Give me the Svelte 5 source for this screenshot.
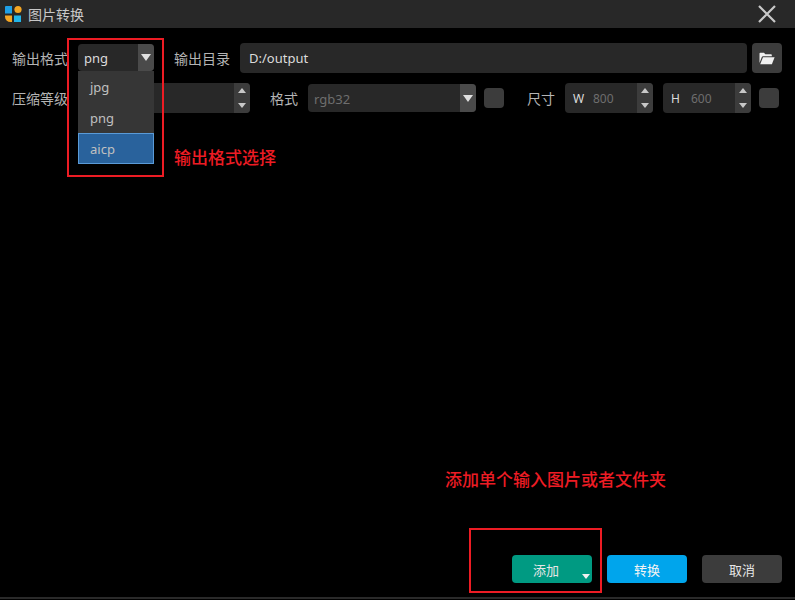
<script>
  let fmtOptions = ['jpg', 'png', 'aicp'];
  let selected = 'aicp';
</script>

<div class="window">
  <div class="titlebar">
    <svg class="logo" width="18" height="18" viewBox="0 0 18 18">
      <path d="M1 2 a1 1 0 0 1 1 -1 h6 v7.5 h-7 z" fill="#1f9fe6"/>
      <circle cx="14" cy="4.5" r="3.6" fill="#f5a623"/>
      <path d="M1 10.5 h7 v6.5 h-1.5 a5.5 5.5 0 0 1 -5.5 -5.5 z" fill="#f5a623"/>
      <rect x="10" y="10.5" width="7" height="6.5" fill="#22b5ea"/>
    </svg>
    <span class="title">图片转换</span>
    <svg class="close" width="20" height="20" viewBox="0 0 20 20">
      <path d="M2 2 L18 18 M18 2 L2 18" stroke="#c8c8c8" stroke-width="2.2" fill="none"/>
    </svg>
  </div>

  <div class="content">
    <div class="row one">
      <span class="label">输出格式</span>
      <div class="combo fmt">
        <span class="value">png</span>
        <span class="arrowbox"><i class="down"></i></span>
        <ul class="popup">
          {#each fmtOptions as opt}
            <li class:active={opt === selected}>{opt}</li>
          {/each}
        </ul>
      </div>
      <span class="label dir">输出目录</span>
      <div class="pathinput">D:/output</div>
      <button class="browse" aria-label="browse">
        <svg width="16" height="13" viewBox="0 0 16 13">
          <path d="M0.5 11 V1.6 Q0.5 0.8 1.3 0.8 H5 L6.3 2.2 H12 Q12.8 2.2 12.8 3 V4.2 H4 Q3.2 4.2 2.8 5 Z" fill="#f0f0f0"/>
          <path d="M1.2 12.2 L4 5.3 H15.6 L12.9 12.2 Z" fill="#f0f0f0"/>
        </svg>
      </button>
    </div>

    <div class="row two">
      <span class="label">压缩等级</span>
      <div class="spin level">
        <span class="spinbtns"><i class="up"></i><i class="down"></i></span>
      </div>
      <span class="label fmt2">格式</span>
      <div class="combo rgb">
        <span class="value dim">rgb32</span>
        <span class="arrowbox"><i class="down"></i></span>
      </div>
      <span class="check c1"></span>
      <span class="label size">尺寸</span>
      <div class="spin dim-box">
        <span class="letter">W</span><span class="num">800</span>
        <span class="spinbtns"><i class="up"></i><i class="down"></i></span>
      </div>
      <div class="spin dim-box">
        <span class="letter">H</span><span class="num">600</span>
        <span class="spinbtns"><i class="up"></i><i class="down"></i></span>
      </div>
      <span class="check c2"></span>
    </div>
  </div>

  <div class="footer">
    <button class="btn add">添加<i class="down small"></i></button>
    <button class="btn convert">转换</button>
    <button class="btn cancel">取消</button>
  </div>

  <div class="bottomline"></div>

  <!-- annotations on top of the screenshot -->
  <div class="mark box1"></div>
  <div class="note note1">输出格式选择</div>
  <div class="note note2">添加单个输入图片或者文件夹</div>
  <div class="mark box2"></div>
</div>

<style>
  :global(body) {
    margin: 0;
    background: #000;
  }

  .window {
    position: relative;
    width: 795px;
    height: 600px;
    display: flex;
    flex-direction: column;
    background: #000;
    color: #c8c8c8;
    font-family: "Noto Sans", "Noto Sans CJK SC", sans-serif;
    font-size: 13px;
    overflow: hidden;
  }

  .titlebar {
    height: 28px;
    flex: none;
    display: flex;
    align-items: center;
    background: #282828;
    padding: 0 18px 0 4px;
  }
  .logo { margin-right: 6px; }
  .title { font-size: 14px; color: #c8c8c8; }
  .close { margin-left: auto; }

  .content { padding: 15px 13px 0 12px; }

  .row {
    display: flex;
    align-items: center;
    height: 30px;
  }
  .two { margin-top: 10px; }

  .label { flex: none; width: 56px; white-space: nowrap; color: #b4b4b4; font-size: 14px; }
  .dir { margin-left: 20px; }

  .combo {
    position: relative;
    box-sizing: border-box;
    display: flex;
    align-items: center;
    justify-content: space-between;
    background: #282828;
    border-radius: 4px;
  }
  .fmt { width: 76px; height: 27px; margin-left: 10px; margin-bottom: 1px; }
  .rgb { width: 168px; height: 28px; margin-left: 10px; }

  .value { padding: 1px 0 0 6px; color: #dcdcdc; }
  .value.dim { color: #6e6e6e; }
  .arrowbox {
    width: 16px;
    height: 100%;
    background: #4a4a4a;
    border-radius: 0 4px 4px 0;
    display: flex;
    align-items: center;
    justify-content: center;
  }

  i.down, i.up {
    display: block;
    width: 0;
    height: 0;
    border-left: 5px solid transparent;
    border-right: 5px solid transparent;
  }
  i.down { border-top: 7px solid #e0e0e0; }
  i.up { border-bottom: 7px solid #e0e0e0; }

  .popup {
    position: absolute;
    top: 27px;
    left: 0;
    width: 76px;
    margin: 0;
    padding: 0;
    list-style: none;
    background: #363636;
    z-index: 2;
  }
  .popup li {
    box-sizing: border-box;
    height: 31px;
    line-height: 32px;
    padding-left: 12px;
    color: #c0c0c0;
  }
  .popup li.active {
    background: #29629c;
    border: 1px solid #5a9bd8;
    line-height: 30px;
    padding-left: 11px;
  }

  .pathinput {
    flex: 1;
    height: 30px;
    line-height: 31px;
    margin-left: 10px;
    padding-left: 9px;
    background: #282828;
    border-radius: 4px;
    color: #dcdcdc;
  }
  .browse {
    flex: none;
    width: 30px;
    height: 30px;
    margin-left: 5px;
    padding: 0;
    border: 0;
    border-radius: 4px;
    background: #3c3c3c;
    display: flex;
    align-items: center;
    justify-content: center;
  }

  .spin {
    position: relative;
    box-sizing: border-box;
    height: 30px;
    display: flex;
    align-items: center;
    background: #282828;
    border-radius: 4px;
  }
  .level { width: 172px; margin-left: 10px; }
  .spinbtns {
    margin-left: auto;
    width: 16px;
    height: 100%;
    background: #3c3c3c;
    border-radius: 0 4px 4px 0;
    display: flex;
    flex-direction: column;
    align-items: center;
    justify-content: center;
    gap: 10px;
  }
  .spinbtns i.up, .spinbtns i.down {
    border-left-width: 4px;
    border-right-width: 4px;
  }
  .spinbtns i.up { border-bottom: 5px solid #c8c8c8; }
  .spinbtns i.down { border-top: 5px solid #c8c8c8; }

  .fmt2 { width: 28px; margin-left: 20px; }
  .check {
    flex: none;
    width: 20px;
    height: 20px;
    border-radius: 4px;
    background: #3c3c3c;
  }
  .c1 { margin-left: 8px; }
  .c2 { margin-left: 8px; }
  .size { width: 28px; margin-left: 23px; }

  .dim-box { width: 88px; margin-left: 10px; font-size: 12px; }
  .letter { width: 12px; margin-left: 8px; color: #dcdcdc; }
  .num { margin-left: 8px; color: #6e6e6e; }

  .footer {
    margin-top: auto;
    margin-bottom: 14px;
    padding-right: 13px;
    display: flex;
    justify-content: flex-end;
    gap: 15px;
  }
  .btn {
    position: relative;
    width: 80px;
    height: 28px;
    padding: 0;
    border: 0;
    border-radius: 4px;
    font: inherit;
    font-size: 13px;
    color: #e6e6e6;
  }
  .add { background: #009a82; padding-right: 12px; }
  .convert { background: #00a5ec; color: #f4f4f4; }
  .cancel { background: #3c3c3c; }
  i.small {
    position: absolute;
    right: 2px;
    bottom: 4px;
    border-left-width: 4.5px;
    border-right-width: 4.5px;
    border-top: 5px solid #f0f0f0;
  }

  .bottomline {
    height: 2px;
    flex: none;
    margin-bottom: 1px;
    background: #2a2a2a;
  }

  .mark {
    position: absolute;
    box-sizing: border-box;
    border: 2px solid #ed1c24;
    z-index: 3;
  }
  .box1 { left: 67px; top: 38px; width: 97px; height: 139px; }
  .box2 { left: 469px; top: 528px; width: 133px; height: 65px; }

  .note {
    position: absolute;
    color: #ed1c24;
    font-size: 17px;
    line-height: 20px;
    white-space: nowrap;
    font-weight: 500;
    z-index: 3;
  }
  .note1 { left: 174px; top: 148px; }
  .note2 { left: 445px; top: 470px; }
</style>
